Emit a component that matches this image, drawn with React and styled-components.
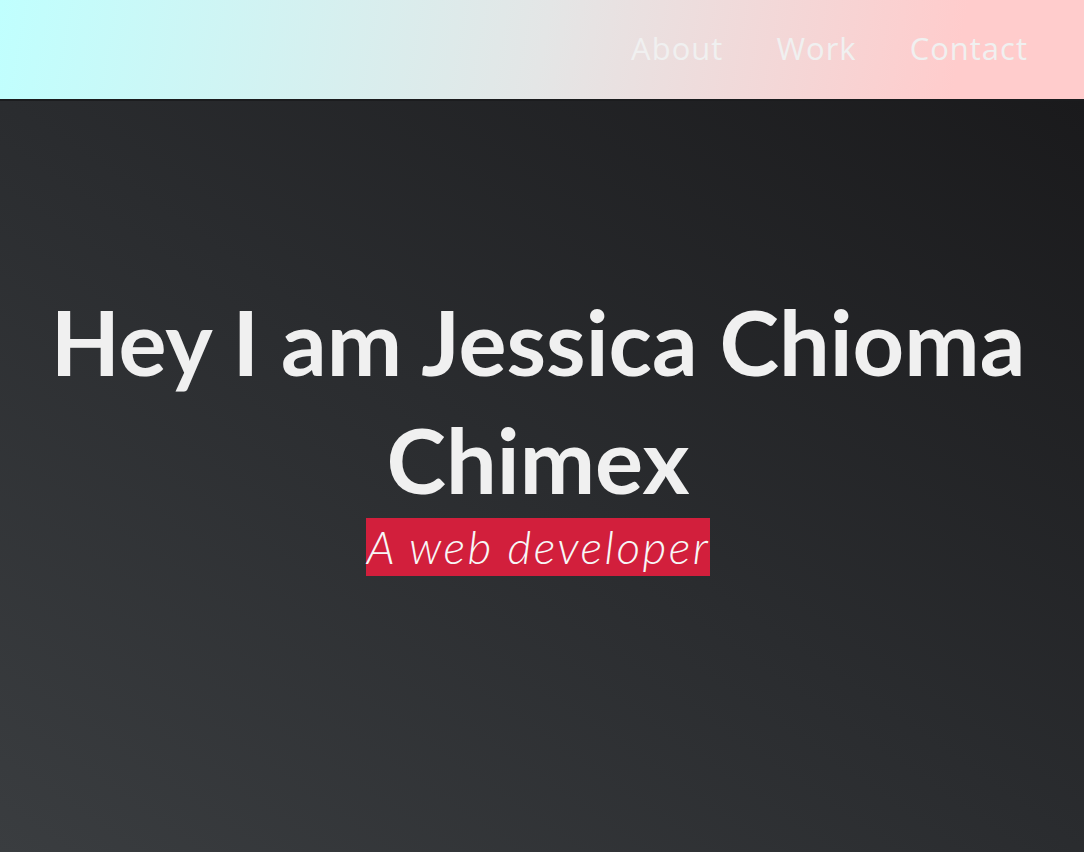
import React from 'react'
import styled, {createGlobalStyle} from 'styled-components'

const GlobalStyle = createGlobalStyle`
  html, body {
    margin: 0;
    padding: 0;
  }
  body {
    font-family: "Lato", "Open Sans", sans-serif;
    background: #1b1c1e;
  }
`
const Page = styled.div`
  display: flex;
  flex-direction: column;
  min-height: 852px;
`
const Header = styled.header`
  box-sizing: border-box;
  height: 101px;
  display: flex;
  justify-content: flex-end;
  align-items: center;
  padding: 0 56px 4px 0;
  gap: 53px;
  background: linear-gradient(100deg, #c0fffe 0%, #e4e6e6 50%, #ffcccc 88%);
  border-bottom: 2px solid #1b1c1e;
`
const NavLink = styled.a`
  font-family: "Open Sans", sans-serif;
  font-weight: 400;
  font-size: 31px;
  letter-spacing: 1px;
  color: #f0f0f0;
  text-decoration: none;
  cursor: pointer;
`
const Hero = styled.main`
  flex: 1;
  display: flex;
  flex-direction: column;
  align-items: center;
  padding: 181px 8px 0 0;
  background: linear-gradient(to top right, #3a3d40 0%, #2a2c2f 50%, #1a1a1c 100%);
`
const Title = styled.h1`
  margin: 0;
  max-width: 1040px;
  text-align: center;
  font-family: "Lato", sans-serif;
  font-weight: 700;
  font-size: 90px;
  line-height: 118px;
  color: #f0f0f0;
`
const Subtitle = styled.p`
  margin: 0;
  padding: 0 0 0 1px;
  background: #d21f3c;
  font-family: "Lato", sans-serif;
  font-weight: 300;
  font-style: italic;
  font-size: 46px;
  letter-spacing: 2.4px;
  line-height: 58px;
  color: #f7f7f7;
`

export default function App() {
    return (
        <Page>
            <GlobalStyle/>
            <Header>
                <NavLink>About</NavLink>
                <NavLink>Work</NavLink>
                <NavLink>Contact</NavLink>
            </Header>
            <Hero>
                <Title>Hey I am Jessica Chioma Chimex</Title>
                <Subtitle>A web developer</Subtitle>
            </Hero>
        </Page>
    )
}
